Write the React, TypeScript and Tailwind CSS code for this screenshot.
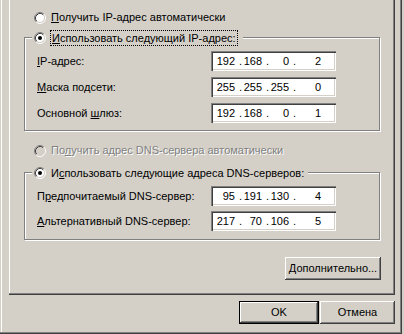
import type { ReactNode } from "react";

const FACE = "#D4D0C8";

// Классическая радиокнопка Windows 2000/XP (12x12)
function Radio({ checked = false, disabled = false }: { checked?: boolean; disabled?: boolean }) {
  return (
    <svg width="12" height="12" viewBox="0 0 12 12" className="shrink-0">
      <circle cx="6" cy="6" r="4.5" fill={disabled ? FACE : "#fff"} />
      <path d="M2.11 9.89A5.5 5.5 0 0 1 9.89 2.11" fill="none" stroke="#808080" />
      <path d="M9.89 2.11A5.5 5.5 0 0 1 2.11 9.89" fill="none" stroke="#fff" />
      <path d="M2.82 9.18A4.5 4.5 0 0 1 9.18 2.82" fill="none" stroke="#404040" />
      <path d="M9.18 2.82A4.5 4.5 0 0 1 2.82 9.18" fill="none" stroke={FACE} />
      {checked && <circle cx="6" cy="6" r="2" fill="#000" />}
    </svg>
  );
}

// Подчёркнутая буква-мнемоника
function U({ children }: { children: ReactNode }) {
  return <span className="underline decoration-1 underline-offset-[1px]">{children}</span>;
}

// Поле IP-адреса: октеты прижаты вправо, точки на фиксированных местах
function IpBox({ parts }: { parts: [string, string, string, string] }) {
  return (
    <div className="flex h-[20px] w-[125px] shrink-0 items-center bg-white pl-[2px] text-black shadow-[inset_1px_1px_0_#808080,inset_2px_2px_0_#404040,inset_-1px_-1px_0_#fff,inset_-2px_-2px_0_#D4D0C8]">
      <span className="w-[26px] pr-[4px] text-right">{parts[0]}</span>
      <span className="w-[3px]">.</span>
      <span className="w-[24px] pr-[4px] text-right">{parts[1]}</span>
      <span className="w-[3px]">.</span>
      <span className="w-[24px] pr-[4px] text-right">{parts[2]}</span>
      <span className="w-[3px]">.</span>
      <span className="w-[25px] text-right">{parts[3]}</span>
    </div>
  );
}

function Row({ label, parts }: { label: ReactNode; parts: [string, string, string, string] }) {
  return (
    <div className="flex h-[20px] items-center">
      <span className="w-[174px]">{label}</span>
      <IpBox parts={parts} />
    </div>
  );
}

function Button({ children, isDefault = false, className = "" }: { children: ReactNode; isDefault?: boolean; className?: string }) {
  return (
    <div className={"flex h-[23px] items-center justify-center " + (isDefault ? "border border-black " : "") + className}>
      <div className="flex h-full w-full items-center justify-center shadow-[inset_-1px_-1px_0_#404040,inset_1px_1px_0_#fff,inset_-2px_-2px_0_#808080]">
        {children}
      </div>
    </div>
  );
}

export default function App() {
  return (
    <div className="h-[334px] w-[404px] overflow-hidden bg-[#D4D0C8] font-['Liberation_Sans',Arial,sans-serif] text-[11px] leading-[13px] text-black">
      {/* Окно */}
      <div className="flex h-[334px] w-[402px] flex-col shadow-[inset_-1px_-1px_0_#404040,inset_-2px_-2px_0_#808080,inset_1px_0_0_#D4D0C8,inset_2px_0_0_#fff]">
        {/* Вкладка свойств */}
        <div className="ml-[9px] h-[295px] w-[386px] pl-[15px] pt-[11px] shadow-[inset_-1px_-1px_0_#404040,inset_-2px_-2px_0_#808080,inset_1px_0_0_#fff]">
          <div className="ml-[10px] flex h-[13px] items-center">
            <Radio />
            <span className="ml-[5px]">
              <U>П</U>олучить IP-адрес автоматически
            </span>
          </div>

          {/* Группа IP */}
          <div className="mt-[13px] w-[356px] border border-[#808080] pb-[7px] shadow-[inset_1px_1px_0_#fff,1px_1px_0_#fff]">
            <div className="-mt-[8px] ml-[7px] flex h-[16px] w-fit items-center bg-[#D4D0C8] pl-[2px] pr-[5px]">
              <Radio checked />
              <span className="ml-[4px] border border-dotted border-black px-px leading-[14px]">
                <U>И</U>спользовать следующий IP-адрес:
              </span>
            </div>
            <div className="mt-[5px] flex flex-col gap-[6px] pl-[12px]">
              <Row label={<><U>I</U>P-адрес:</>} parts={["192", "168", "0", "2"]} />
              <Row label={<><U>М</U>аска подсети:</>} parts={["255", "255", "255", "0"]} />
              <Row label={<>Основной <U>ш</U>люз:</>} parts={["192", "168", "0", "1"]} />
            </div>
          </div>

          <div className="ml-[10px] mt-[13px] flex h-[13px] items-center">
            <Radio disabled />
            <span className="ml-[5px] text-[#808080] [text-shadow:1px_1px_0_#fff]">
              По<U>л</U>учить адрес DNS-сервера автоматически
            </span>
          </div>

          {/* Группа DNS */}
          <div className="mt-[15px] w-[356px] border border-[#808080] pb-[8px] shadow-[inset_1px_1px_0_#fff,1px_1px_0_#fff]">
            <div className="-mt-[8px] ml-[7px] flex h-[16px] w-fit items-center bg-[#D4D0C8] pl-[2px] pr-[4px]">
              <Radio checked />
              <span className="ml-[5px]">
                И<U>с</U>пользовать следующие адреса DNS-серверов:
              </span>
            </div>
            <div className="mt-[5px] flex flex-col gap-[5px] pl-[12px]">
              <Row label={<>П<U>р</U>едпочитаемый DNS-сервер:</>} parts={["95", "191", "130", "4"]} />
              <Row label={<><U>А</U>льтернативный DNS-сервер:</>} parts={["217", "70", "106", "5"]} />
            </div>
          </div>

          <div className="mt-[17px] flex w-[357px] justify-end">
            <Button className="w-[96px]">
              <span>
                <U>Д</U>ополнительно...
              </span>
            </Button>
          </div>
        </div>

        {/* Кнопки диалога */}
        <div className="mr-[7px] mt-[6px] flex justify-end gap-px">
          <Button isDefault className="w-[80px]">OK</Button>
          <Button className="w-[75px]">Отмена</Button>
        </div>
      </div>
    </div>
  );
}
